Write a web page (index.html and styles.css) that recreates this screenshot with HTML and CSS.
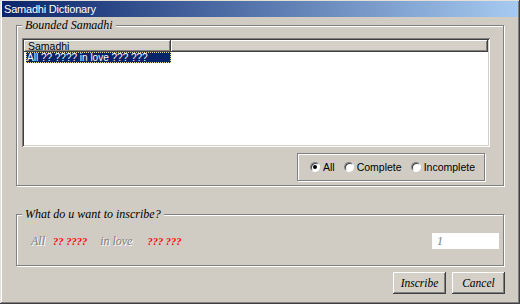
FILE: index.html
```html
<!DOCTYPE html>
<html>
<head>
<meta charset="utf-8">
<title>Samadhi Dictionary</title>
<link rel="stylesheet" href="styles.css">
</head>
<body>
<div class="window">
  <div class="titlebar"><span class="title">Samadhi Dictionary</span></div>
  <div class="content">
    <fieldset class="group group-bounded">
      <legend class="legend">Bounded Samadhi</legend>
      <div class="list">
        <div class="list-header">
          <div class="col-head">Samadhi</div>
          <div class="col-rest"></div>
        </div>
        <div class="list-body">
          <div class="row selected">All ?? ???? in love ??? ???</div>
        </div>
      </div>
      <div class="radio-group">
        <div class="opt"><span class="radio checked"></span><span class="opt-label">All</span></div>
        <div class="opt"><span class="radio"></span><span class="opt-label">Complete</span></div>
        <div class="opt"><span class="radio"></span><span class="opt-label">Incomplete</span></div>
      </div>
    </fieldset>
    <fieldset class="group group-inscribe">
      <legend class="legend">What do u want to inscribe?</legend>
      <div class="inscribe-row">
        <span class="lbl lbl-all">All</span>
        <span class="red red-1">?? ????</span>
        <span class="lbl lbl-love">in love</span>
        <span class="red red-2">??? ???</span>
        <div class="spacer"></div>
        <div class="edit">1</div>
      </div>
    </fieldset>
    <div class="buttons">
      <button class="btn">Inscribe</button>
      <button class="btn">Cancel</button>
    </div>
  </div>
</div>
</body>
</html>
```
FILE: styles.css
```css
html, body {
  margin: 0;
  padding: 0;
  background: #d0ccc4;
}

.window {
  width: 520px;
  height: 304px;
  box-sizing: border-box;
  padding: 1px 2px 2px 2px;
  background: #d0ccc4;
  box-shadow: inset -1px -1px 0 #404040, inset 1px 1px 0 #e4e0d8,
              inset -2px -2px 0 #808080, inset 2px 2px 0 #ffffff;
  display: flex;
  flex-direction: column;
  font-family: "Liberation Sans", Arial, sans-serif;
}

.titlebar {
  height: 16px;
  background: linear-gradient(to right, #0a246a, #a6caf0);
  display: flex;
  align-items: center;
  padding-left: 2px;
}

.title {
  color: #ffffff;
  font-size: 11px;
  letter-spacing: -0.2px;
  line-height: 16px;
}

.content {
  display: flex;
  flex-direction: column;
  padding: 0 14px 0 14px;
}

.group {
  margin: 0;
  border: 1px solid #808080;
  box-shadow: inset 1px 1px 0 #ffffff, 1px 1px 0 #ffffff;
  min-inline-size: 0;
}

.legend {
  font-family: "Liberation Serif", "Times New Roman", serif;
  font-style: italic;
  font-size: 12px;
  line-height: 12px;
  height: 12px;
  padding: 0 3px;
  background: #d0ccc4;
  color: #000000;
}

.group-bounded {
  margin-top: 2px;
  padding: 7px 13px 4px 5px;
  display: flex;
  flex-direction: column;
}

.list {
  height: 109px;
  box-sizing: border-box;
  padding: 2px;
  background: #ffffff;
  box-shadow: inset 1px 1px 0 #808080, inset -1px -1px 0 #ffffff,
              inset 2px 2px 0 #404040, inset -2px -2px 0 #d4d0c8;
  display: flex;
  flex-direction: column;
}

.list-header {
  height: 12px;
  display: flex;
  flex: none;
}

.col-head,
.col-rest {
  background: #d4d0c8;
  box-shadow: inset -1px -1px 0 #404040, inset 1px 1px 0 #ffffff,
              inset -2px -2px 0 #808080;
}

.col-head {
  width: 147px;
  box-sizing: border-box;
  padding-left: 4px;
  font-size: 10.5px;
  line-height: 12px;
  color: #000000;
}

.col-rest {
  flex: 1;
}

.list-body {
  flex: 1;
}

.row {
  width: 145px;
  height: 11px;
  box-sizing: border-box;
  margin-left: 2px;
  padding-left: 1px;
  font-size: 10px;
  line-height: 11px;
  white-space: nowrap;
}

.row.selected {
  background: #0a246a;
  color: #ffffff;
  outline: 1px dotted #e8d890;
  outline-offset: -1px;
}

.radio-group {
  align-self: flex-end;
  margin-top: 6px;
  margin-right: 5px;
  width: 188px;
  height: 28px;
  box-sizing: border-box;
  border: 1px solid #808080;
  box-shadow: inset 1px 1px 0 #ffffff, 1px 1px 0 #ffffff;
  display: flex;
  align-items: center;
  padding-left: 12px;
  gap: 9px;
}

.opt {
  display: flex;
  align-items: center;
  gap: 3px;
}

.radio {
  width: 10px;
  height: 10px;
  box-sizing: border-box;
  border-radius: 50%;
  border: 1px solid;
  border-color: #808080 #ffffff #ffffff #808080;
  background: #ffffff;
  box-shadow: inset 1px 1px 0 #404040;
  display: flex;
  align-items: center;
  justify-content: center;
}

.radio.checked::after {
  content: "";
  width: 4px;
  height: 4px;
  border-radius: 50%;
  background: #000000;
}

.opt-label {
  font-size: 10.5px;
  line-height: 12px;
  color: #000000;
}

.group-inscribe {
  margin-top: 22px;
  padding: 13px 4px 16px 5px;
}

.inscribe-row {
  display: flex;
  align-items: center;
  padding-left: 9px;
  height: 16px;
  font-family: "Liberation Serif", "Times New Roman", serif;
  font-style: italic;
}

.lbl {
  font-size: 12px;
  color: #808080;
  text-shadow: 1px 1px 0 #ffffff;
}

.red {
  font-size: 10.5px;
  font-weight: bold;
  color: #ff0000;
}

.lbl-all { margin-right: 8px; }
.red-1 { margin-right: 13px; }
.lbl-love { margin-right: 15px; }

.spacer {
  flex: 1;
}

.edit {
  width: 67px;
  height: 16px;
  box-sizing: border-box;
  background: #ffffff;
  padding-left: 5px;
  font-size: 12px;
  line-height: 16px;
  color: #808080;
}

.buttons {
  display: flex;
  justify-content: flex-end;
  gap: 6px;
  margin-top: 6px;
  margin-right: -1px;
}

.btn {
  width: 53px;
  height: 22px;
  padding: 0;
  border: none;
  background: #d4d0c8;
  box-shadow: inset -1px -1px 0 #404040, inset 1px 1px 0 #ffffff,
              inset -2px -2px 0 #808080, inset 2px 2px 0 #d4d0c8;
  font-family: "Liberation Serif", "Times New Roman", serif;
  font-style: italic;
  font-size: 11.5px;
  color: #000000;
}
```
